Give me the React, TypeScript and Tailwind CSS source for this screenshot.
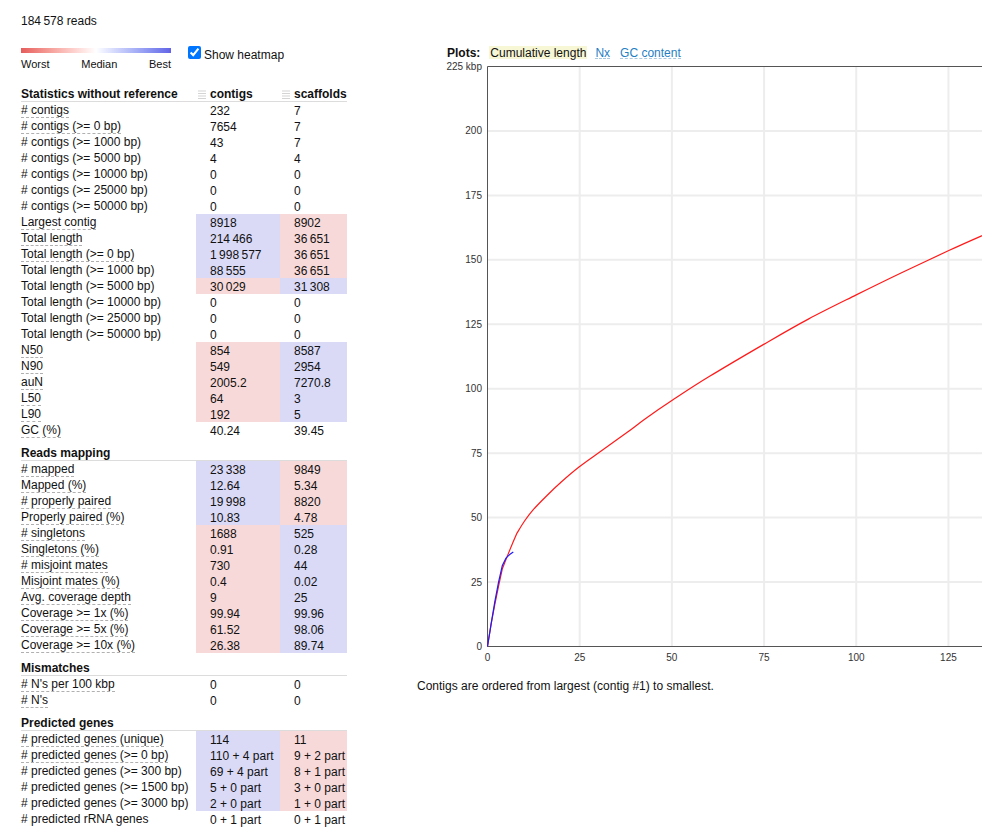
import React from "react";

type Row = { l: string; a: string; b: string; d?: boolean; ca?: "B" | "R"; cb?: "B" | "R" };
type Section = { title: string; rows: Row[] };

const T = "\u2009";

const sections: Section[] = [
  {
    title: "Statistics without reference",
    rows: [
      { l: "# contigs", a: "232", b: "7", d: true },
      { l: "# contigs (>= 0 bp)", a: "7654", b: "7", d: true },
      { l: "# contigs (>= 1000 bp)", a: "43", b: "7" },
      { l: "# contigs (>= 5000 bp)", a: "4", b: "4" },
      { l: "# contigs (>= 10000 bp)", a: "0", b: "0" },
      { l: "# contigs (>= 25000 bp)", a: "0", b: "0" },
      { l: "# contigs (>= 50000 bp)", a: "0", b: "0" },
      { l: "Largest contig", a: "8918", b: "8902", d: true, ca: "B", cb: "R" },
      { l: "Total length", a: `214${T}466`, b: `36${T}651`, d: true, ca: "B", cb: "R" },
      { l: "Total length (>= 0 bp)", a: `1${T}998${T}577`, b: `36${T}651`, d: true, ca: "B", cb: "R" },
      { l: "Total length (>= 1000 bp)", a: `88${T}555`, b: `36${T}651`, ca: "B", cb: "R" },
      { l: "Total length (>= 5000 bp)", a: `30${T}029`, b: `31${T}308`, ca: "R", cb: "B" },
      { l: "Total length (>= 10000 bp)", a: "0", b: "0" },
      { l: "Total length (>= 25000 bp)", a: "0", b: "0" },
      { l: "Total length (>= 50000 bp)", a: "0", b: "0" },
      { l: "N50", a: "854", b: "8587", d: true, ca: "R", cb: "B" },
      { l: "N90", a: "549", b: "2954", d: true, ca: "R", cb: "B" },
      { l: "auN", a: "2005.2", b: "7270.8", d: true, ca: "R", cb: "B" },
      { l: "L50", a: "64", b: "3", d: true, ca: "R", cb: "B" },
      { l: "L90", a: "192", b: "5", d: true, ca: "R", cb: "B" },
      { l: "GC (%)", a: "40.24", b: "39.45", d: true },
    ],
  },
  {
    title: "Reads mapping",
    rows: [
      { l: "# mapped", a: `23${T}338`, b: "9849", d: true, ca: "B", cb: "R" },
      { l: "Mapped (%)", a: "12.64", b: "5.34", d: true, ca: "B", cb: "R" },
      { l: "# properly paired", a: `19${T}998`, b: "8820", d: true, ca: "B", cb: "R" },
      { l: "Properly paired (%)", a: "10.83", b: "4.78", d: true, ca: "B", cb: "R" },
      { l: "# singletons", a: "1688", b: "525", d: true, ca: "R", cb: "B" },
      { l: "Singletons (%)", a: "0.91", b: "0.28", d: true, ca: "R", cb: "B" },
      { l: "# misjoint mates", a: "730", b: "44", d: true, ca: "R", cb: "B" },
      { l: "Misjoint mates (%)", a: "0.4", b: "0.02", d: true, ca: "R", cb: "B" },
      { l: "Avg. coverage depth", a: "9", b: "25", d: true, ca: "R", cb: "B" },
      { l: "Coverage >= 1x (%)", a: "99.94", b: "99.96", d: true, ca: "R", cb: "B" },
      { l: "Coverage >= 5x (%)", a: "61.52", b: "98.06", d: true, ca: "R", cb: "B" },
      { l: "Coverage >= 10x (%)", a: "26.38", b: "89.74", d: true, ca: "R", cb: "B" },
    ],
  },
  {
    title: "Mismatches",
    rows: [
      { l: "# N's per 100 kbp", a: "0", b: "0", d: true },
      { l: "# N's", a: "0", b: "0", d: true },
    ],
  },
  {
    title: "Predicted genes",
    rows: [
      { l: "# predicted genes (unique)", a: "114", b: "11", d: true, ca: "B", cb: "R" },
      { l: "# predicted genes (>= 0 bp)", a: "110 + 4 part", b: "9 + 2 part", d: true, ca: "B", cb: "R" },
      { l: "# predicted genes (>= 300 bp)", a: "69 + 4 part", b: "8 + 1 part", ca: "B", cb: "R" },
      { l: "# predicted genes (>= 1500 bp)", a: "5 + 0 part", b: "3 + 0 part", ca: "B", cb: "R" },
      { l: "# predicted genes (>= 3000 bp)", a: "2 + 0 part", b: "1 + 0 part", ca: "B", cb: "R" },
      { l: "# predicted rRNA genes", a: "0 + 1 part", b: "0 + 1 part" },
    ],
  },
];

function bg(c?: "B" | "R") {
  if (c === "B") return "bg-[#dadaf7]";
  if (c === "R") return "bg-[#f8d9d9]";
  return "";
}

function Grip() {
  return (
    <svg width="8" height="10" viewBox="0 0 8 10" className="mt-[3px] ml-[2px] mr-[4px] shrink-0">
      <rect x="0" y="0.5" width="8" height="1" fill="#d4d4d4" />
      <rect x="0" y="3" width="8" height="1" fill="#d4d4d4" />
      <rect x="0" y="5.5" width="8" height="1" fill="#d4d4d4" />
      <rect x="0" y="8" width="8" height="1" fill="#d4d4d4" />
    </svg>
  );
}

function StatsTable() {
  return (
    <div className="w-[326px] text-[12px] text-[#111]">
      {sections.map((s, si) => (
        <div key={s.title}>
          {si === 0 ? (
            <div className="flex h-[17px] pt-[2px] leading-[14px] border-b border-[#dcdcdc] font-bold">
              <div className="w-[175px]">{s.title}</div>
              <div className="w-[84px] flex">
                <Grip />
                <span>contigs</span>
              </div>
              <div className="w-[67px] flex">
                <Grip />
                <span>scaffolds</span>
              </div>
            </div>
          ) : (
            <div className="pt-[8px] h-[23px] leading-[14px] border-b border-[#dcdcdc] font-bold">{s.title}</div>
          )}
          {s.rows.map((r) => (
            <div key={r.l} className="flex h-[16px]">
              <div className="w-[175px] whitespace-nowrap pt-[2px] leading-[13px]">
                {r.d ? (
                  <span className="block w-fit leading-[13px] border-b border-dashed border-[#b0b0b0]">{r.l}</span>
                ) : (
                  r.l
                )}
              </div>
              <div className={`w-[84px] pl-[14px] pt-[2px] leading-[14px] whitespace-nowrap ${bg(r.ca)}`}>{r.a}</div>
              <div className={`w-[67px] pl-[14px] pt-[2px] leading-[14px] whitespace-nowrap ${bg(r.cb)}`}>{r.b}</div>
            </div>
          ))}
        </div>
      ))}
    </div>
  );
}

const X = (c: number) => 70.5 + c * 3.6875;
const Y = (v: number) => 587.5 - (v * 580) / 225;

const redEarly: [number, number][] = [
  [0, 0], [1, 8.918], [2, 16.42], [3, 23.42], [4, 30.03], [5, 33.7], [6, 37.3], [7, 40.7], [8, 44.0],
];
const redSmooth: [number, number][] = [
  [8, 44.0], [10, 48.6], [12.3, 52.9], [16, 58.4], [20, 63.8], [24.9, 69.7], [31.2, 76.2], [38, 83.2], [43, 88.56],
  [50.2, 95.6], [60, 104.6], [74.9, 117.2], [87, 127.0], [100, 136.4], [112, 144.8], [125.1, 153.6],
  [134, 159.3], [150, 169.2], [180, 187], [232, 214.47],
];
const blue: [number, number][] = [
  [0, 0], [1, 8.902], [2, 17.489], [3, 24.989], [4, 31.308], [5, 34.262], [6, 35.651], [7, 36.651],
];

const pts = (a: [number, number][]) => a.map(([c, v]) => `${X(c).toFixed(2)},${Y(v).toFixed(2)}`).join(" ");

function redPath() {
  const e = redEarly.map(([c, v]) => [X(c), Y(v)]);
  let d = `M${e[0][0].toFixed(2)},${e[0][1].toFixed(2)}`;
  for (let i = 1; i < e.length; i++) d += ` L${e[i][0].toFixed(2)},${e[i][1].toFixed(2)}`;
  const p = redSmooth.map(([c, v]) => [X(c), Y(v)]);
  for (let i = 0; i < p.length - 1; i++) {
    const p0 = p[i - 1] || p[i];
    const p1 = p[i];
    const p2 = p[i + 1];
    const p3 = p[i + 2] || p2;
    const c1x = p1[0] + (p2[0] - p0[0]) / 6;
    const c1y = p1[1] + (p2[1] - p0[1]) / 6;
    const c2x = p2[0] - (p3[0] - p1[0]) / 6;
    const c2y = p2[1] - (p3[1] - p1[1]) / 6;
    d += ` C${c1x.toFixed(2)},${c1y.toFixed(2)} ${c2x.toFixed(2)},${c2y.toFixed(2)} ${p2[0].toFixed(2)},${p2[1].toFixed(2)}`;
  }
  return d;
}

function Chart() {
  const yTicks = [0, 25, 50, 75, 100, 125, 150, 175, 200, 225];
  const xTicks = [0, 25, 50, 75, 100, 125];
  return (
    <svg width="565" height="612" viewBox="0 0 565 612" className="block" style={{ fontFamily: "'Liberation Sans', Arial, sans-serif" }}>
      {yTicks.slice(1, -1).map((v) => (
        <line key={v} x1={70.5} x2={565} y1={Y(v)} y2={Y(v)} stroke="#ededed" strokeWidth={2} />
      ))}
      {xTicks.slice(1).map((c) => (
        <line key={c} x1={X(c)} x2={X(c)} y1={7.5} y2={587.5} stroke="#ededed" strokeWidth={2} />
      ))}
      <line x1={70.5} x2={565} y1={7.5} y2={7.5} stroke="#555" strokeWidth={1} />
      <line x1={70.5} x2={565} y1={587.5} y2={587.5} stroke="#555" strokeWidth={1} />
      <line x1={70.5} x2={70.5} y1={7.5} y2={587.5} stroke="#555" strokeWidth={1} />
      {yTicks.map((v) => (
        <text key={v} x={65} y={Y(v) + 3.5} textAnchor="end" fontSize={10} fill="#333">
          {v === 225 ? "225 kbp" : v}
        </text>
      ))}
      {xTicks.map((c) => (
        <text key={c} x={X(c)} y={602} textAnchor="middle" fontSize={10} fill="#333">
          {c}
        </text>
      ))}
      <path d={redPath()} fill="none" stroke="#ff1a1a" strokeWidth={1.2} strokeLinejoin="round" />
      <polyline points={pts(blue)} fill="none" stroke="#1a1aff" strokeWidth={1.2} strokeLinejoin="round" />
    </svg>
  );
}

export default function App() {
  return (
    <div className="w-[982px] h-[829px] overflow-hidden bg-white text-[#111] text-[12px] leading-[16px] font-['Liberation_Sans',Arial,sans-serif]">
      <div className="pl-[21px] pt-[13px]">
        <div className="h-[15px] leading-[16px]">184{T}578 reads</div>
        <div className="flex">
          <div className="w-[326px]">
            <div className="flex mt-[18px]">
              <div className="w-[150px] pt-[2px]">
                <div className="h-[5px] bg-linear-to-r from-[#e55c5c] via-white to-[#6363e6]" />
                <div className="flex justify-between mt-[3px] text-[11px] leading-[16px]">
                  <span>Worst</span>
                  <span>Median</span>
                  <span>Best</span>
                </div>
              </div>
              <label className="flex items-start ml-[17px]">
                <input type="checkbox" defaultChecked className="w-[13px] h-[13px] accent-[#0075ff]" />
                <span className="ml-[3px] mt-[1px]">Show heatmap</span>
              </label>
            </div>
            <div className="mt-[13px]">
              <StatsTable />
            </div>
          </div>
          <div className="ml-[70px] w-[565px]">
            <div className="flex mt-[18px] leading-[14px] h-[13px]">
              <span className="ml-[30px] font-bold">Plots:</span>
              <span className="ml-[9px] px-[1px] bg-[#f7f7d6]">Cumulative length</span>
              <span className="ml-[8px] text-[#1f80c4] border-b border-dashed border-[#a9c9e0]">Nx</span>
              <span className="ml-[10px] text-[#1f80c4] border-b border-dashed border-[#a9c9e0]">GC content</span>
            </div>
            <Chart />
            <div className="mt-[7px]">Contigs are ordered from largest (contig #1) to smallest.</div>
          </div>
        </div>
      </div>
    </div>
  );
}
